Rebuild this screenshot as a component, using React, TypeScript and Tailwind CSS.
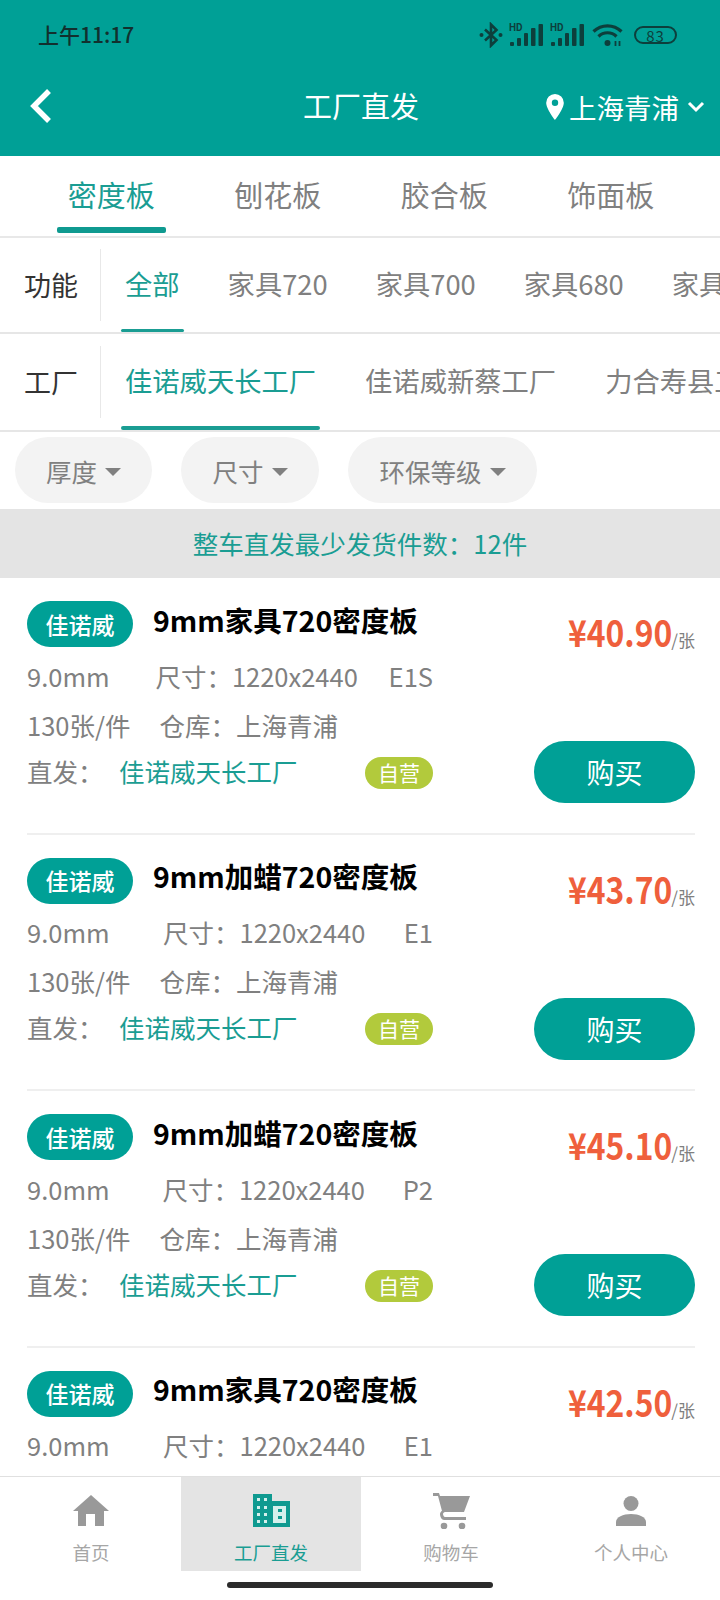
import { ReactNode } from 'react';

const categories = ['密度板', '刨花板', '胶合板', '饰面板'];
const functions = ['全部', '家具720', '家具700', '家具680', '家具660'];
const factories = ['佳诺威天长工厂', '佳诺威新蔡工厂', '力合寿县工厂'];
const filters = [
  { label: '厚度', width: 'w-[137px]' },
  { label: '尺寸', width: 'w-[138px]' },
  { label: '环保等级', width: 'w-[189px]' },
];

const products = [
  { title: '9mm家具720密度板', grade: 'E1S', price: '¥40.90' },
  { title: '9mm加蜡720密度板', grade: 'E1', price: '¥43.70' },
  { title: '9mm加蜡720密度板', grade: 'P2', price: '¥45.10' },
  { title: '9mm家具720密度板', grade: 'E1', price: '¥42.50' },
];

function SignalIcon() {
  return (
    <svg width="35" height="24" viewBox="0 0 35 24" fill="#0d3f3c">
      <text x="0" y="8" fontSize="10" fontWeight="700" fontFamily="Roboto, sans-serif">HD</text>
      <rect x="1" y="19" width="4" height="4" rx="1" />
      <rect x="8" y="15" width="4" height="8" rx="1" />
      <rect x="15" y="10" width="4" height="13" rx="1" />
      <rect x="22" y="5" width="4.500" height="18" rx="1" />
      <rect x="29.500" y="1" width="4.500" height="22" rx="1" />
    </svg>
  );
}

function StatusIcons() {
  return (
    <div className="flex items-center">
      <svg width="24" height="26" viewBox="0 0 24 26" fill="none" stroke="#0d3f3c" strokeWidth="2.600">
        <path d="M6 7.500 17.500 18 12 23.500V2.500L17.500 8 6 18.500" />
        <circle cx="2.500" cy="13" r="2" fill="#0d3f3c" stroke="none" />
        <circle cx="21.500" cy="13" r="2" fill="#0d3f3c" stroke="none" />
      </svg>
      <div className="ml-[6px]"><SignalIcon /></div>
      <div className="ml-[6px]"><SignalIcon /></div>
      <svg className="ml-[7px]" width="31" height="24" viewBox="0 0 31 24" fill="none" stroke="#0d3f3c" strokeWidth="3.200">
        <path d="M1.500 8.500c8-7.500 20-7.500 28 0" />
        <path d="M6.500 13.500c5-5 13-5 18 0" />
        <circle cx="15.500" cy="20" r="3" fill="#0d3f3c" stroke="none" />
        <path d="M23.500 23v-5M27.500 23v-5" strokeWidth="1.800" />
      </svg>
      <div className="ml-[11px] flex h-[18px] w-[43px] items-center justify-center rounded-full border-2 border-[#0d3f3c] text-[15px] leading-none tracking-[1px] text-[#0d3f3c]">
        83
      </div>
    </div>
  );
}

function Header() {
  return (
    <div className="h-[156px] shrink-0 bg-[#00a096]">
      <div className="flex h-[70px] items-center justify-between pl-[38px] pr-[43px]">
        <span className="text-[21px] font-medium text-[#12302e]">上午11:17</span>
        <StatusIcons />
      </div>
      <div className="relative flex h-[74px] items-center justify-end pr-[15px]">
        <svg className="absolute left-[29px] top-[18px]" width="24" height="36" viewBox="0 0 24 36" fill="none" stroke="#fff" strokeWidth="5.500">
          <path d="M20 3 5 18l15 15" />
        </svg>
        <span className="absolute left-[303px] top-[14px] text-[29px] leading-[42px] text-white">工厂直发</span>
        <svg width="18" height="26" viewBox="0 0 18 26" fill="#fff">
          <path fillRule="evenodd" d="M9 0a8.800 8.800 0 0 0-8.800 8.800C.2 15 9 26 9 26s8.800-11 8.800-17.200A8.800 8.800 0 0 0 9 0Zm0 12a3.200 3.200 0 1 1 0-6.400A3.200 3.200 0 0 1 9 12Z" />
        </svg>
        <span className="ml-[5px] text-[27.500px] leading-[40px] text-white">上海青浦</span>
        <svg className="ml-[8px]" width="18" height="12" viewBox="0 0 18 12" fill="none" stroke="#fff" strokeWidth="3">
          <path d="m2 2 7 7 7-7" />
        </svg>
      </div>
    </div>
  );
}

function CategoryTabs() {
  return (
    <div className="flex h-[82px] shrink-0 border-b-2 border-[#e8e8e8] pl-[28px] pr-[26px]">
      {categories.map((name, i) => (
        <div key={name} className="relative flex flex-1 justify-center pt-[14px]">
          <span className={`text-[29px] leading-[48px] ${i === 0 ? 'text-[#1a9d93]' : 'text-[#808080]'}`}>{name}</span>
          {i === 0 && <div className="absolute bottom-[3px] left-[29px] h-[6px] w-[109px] rounded-[2px] bg-[#0f9a90]" />}
        </div>
      ))}
    </div>
  );
}

function FilterRow({ label, items, height, barHeight, gap }: { label: string; items: string[]; height: string; barHeight: string; gap: string }) {
  return (
    <div className={`flex shrink-0 overflow-hidden border-b-2 border-[#e6e6e6] ${height}`}>
      <div className="flex h-[72px] w-[101px] shrink-0 items-center self-center border-r border-[#e8e8e8] pl-[24px] text-[27px] text-[#333]">
        {label}
      </div>
      <div className={`flex whitespace-nowrap pl-[24px] ${gap}`}>
        {items.map((item, i) => (
          <div key={item} className="relative flex items-center pb-[3px]">
            <span className={`text-[27.300px] ${i === 0 ? 'text-[#1a9d93]' : 'text-[#808080]'}`}>{item}</span>
            {i === 0 && <div className={`absolute bottom-0 left-[-4px] right-[-4px] rounded-[2px] bg-[#1a9d93] ${barHeight}`} />}
          </div>
        ))}
      </div>
    </div>
  );
}

function FilterPills() {
  return (
    <div className="flex h-[77px] shrink-0 gap-[29px] pl-[15px] pt-[5px]">
      {filters.map((f) => (
        <div key={f.label} className={`flex h-[66px] items-center justify-center rounded-[33px] bg-[#f3f3f3] pt-[3px] ${f.width}`}>
          <span className="text-[25.500px] text-[#808080]">{f.label}</span>
          <span className="ml-[8px] h-0 w-0 border-x-[8px] border-t-[8px] border-x-transparent border-t-[#808080]" />
        </div>
      ))}
    </div>
  );
}

function ProductCard({ title, grade, price }: { title: string; grade: string; price: string }) {
  return (
    <div className="ml-[27px] mr-[25px] flex h-[256.500px] shrink-0 justify-between border-b-2 border-[#efefef] pt-[23px]">
      <div className="w-[406px] text-[25.500px] text-[#808080]">
        <div className="flex h-[46px] items-center">
          <span className="flex h-[46px] w-[106px] items-center justify-center rounded-[23px] bg-[#00a096] text-[23px] font-medium text-white">佳诺威</span>
          <span className="ml-[20px] whitespace-nowrap pb-[8px] text-[28.500px] font-bold text-black">{title}</span>
        </div>
        <div className="mt-[9px] flex h-[40px] items-center justify-between">
          <span className="pr-[15px]">9.0mm</span>
          <span>尺寸：1220x2440</span>
          <span>{grade}</span>
        </div>
        <div className="mt-[9px] flex h-[40px] items-center gap-[29px]">
          <span>130张/件</span>
          <span>仓库：上海青浦</span>
        </div>
        <div className="mt-[6px] flex h-[40px] items-center justify-between">
          <div className="flex items-center">
            <span className="w-[92px]">直发：</span>
            <span className="text-[#1a9d93]">佳诺威天长工厂</span>
          </div>
          <span className="mt-[3px] flex h-[32px] w-[68px] items-center justify-center rounded-[16px] bg-[#b2ca3c] text-[21px] text-white">自营</span>
        </div>
      </div>
      <div className="flex w-[161px] flex-col items-end">
        <div className="mt-[3px] flex h-[55px] items-baseline whitespace-nowrap">
          <span className="mr-[-2px] origin-right scale-x-[0.86] text-[37px] font-bold text-[#ef5f3c]">{price}</span>
          <span className="ml-[1px] text-[17px] text-[#808080]">/张</span>
        </div>
        <button className="mt-[82px] h-[62px] w-[161px] rounded-[31px] bg-[#00a096] text-[28px] text-white">购买</button>
      </div>
    </div>
  );
}

function HomeIcon() {
  return (
    <svg width="36" height="31" viewBox="0 0 36 31" fill="#999">
      <path d="M18 0 36 16h-5v15h-9V19h-9v12H5V16H0z" />
    </svg>
  );
}

function FactoryIcon() {
  return (
    <svg width="37" height="33" viewBox="0 0 37 33">
      <path fill="#0f9a90" d="M0 0h19v7h18v26H0z" />
      <path fill="#d5f0ec" d="M4 4h3v3H4zM11 4h3v3h-3zM4 12h3v3H4zM11 12h3v3h-3zM4 19h3v3H4zM11 19h3v3h-3zM4 26h3v3H4zM11 26h3v3h-3zM20 12h13v17H20z" />
      <path fill="#0f9a90" d="M25 15h4v3h-4zM25 22h4v3h-4z" />
    </svg>
  );
}

function CartIcon() {
  return (
    <svg width="37" height="36" viewBox="0 0 37 36" fill="#999">
      <path d="M0 0h6l1 3h30l-6 16H12c-1 0-2 1-2 2s1 3 2 3h21v3H11c-2 0-4-3-4-6 0-1 1-3 2-3L5 3H0z" />
      <circle cx="11" cy="33" r="3.300" />
      <circle cx="29" cy="33" r="3.300" />
    </svg>
  );
}

function UserIcon() {
  return (
    <svg width="30" height="30" viewBox="0 0 30 30" fill="#999">
      <circle cx="15" cy="7.500" r="7.500" />
      <path d="M0 30v-4c0-5 7-8 15-8s15 3 15 8v4z" />
    </svg>
  );
}

function NavItem({ label, icon, active }: { label: string; icon: ReactNode; active?: boolean }) {
  return (
    <div className={`flex h-[94px] w-[180px] shrink-0 flex-col items-center ${active ? 'bg-[#e4e4e4]' : ''}`}>
      <div className="mt-[15px] flex h-[37px] items-center justify-center">{icon}</div>
      <span className={`mt-[9px] text-[18.500px] leading-[28px] ${active ? 'text-[#1a9d93]' : 'text-[#a6a6a6]'}`}>{label}</span>
    </div>
  );
}

function BottomNav() {
  return (
    <div className="relative h-[124px] shrink-0 overflow-hidden border-t border-[#e0e0e0] bg-white">
      <div className="flex pl-[1px]">
        <NavItem label="首页" icon={<HomeIcon />} />
        <NavItem label="工厂直发" icon={<FactoryIcon />} active />
        <NavItem label="购物车" icon={<CartIcon />} />
        <NavItem label="个人中心" icon={<UserIcon />} />
      </div>
      <div className="absolute bottom-[12px] left-[227px] h-[6px] w-[266px] rounded-full bg-[#2b2b2b]" />
    </div>
  );
}

export default function App() {
  return (
    <div className="flex h-[1600px] w-[720px] flex-col overflow-hidden bg-white font-['Noto_Sans_CJK_SC','Noto_Sans',sans-serif]">
      <Header />
      <CategoryTabs />
      <FilterRow label="功能" items={functions} height="h-[96px]" barHeight="h-[3px]" gap="gap-[48px]" />
      <FilterRow label="工厂" items={factories} height="h-[98px]" barHeight="h-[4px]" gap="gap-[49px]" />
      <FilterPills />
      <div className="flex h-[69px] shrink-0 items-center justify-center bg-[#e4e4e4] text-[25.500px] text-[#1a9d93]">
        整车直发最少发货件数：12件
      </div>
      <div className="flex min-h-0 flex-1 flex-col overflow-hidden">
        {products.map((p, i) => (
          <ProductCard key={i} {...p} />
        ))}
      </div>
      <BottomNav />
    </div>
  );
}
